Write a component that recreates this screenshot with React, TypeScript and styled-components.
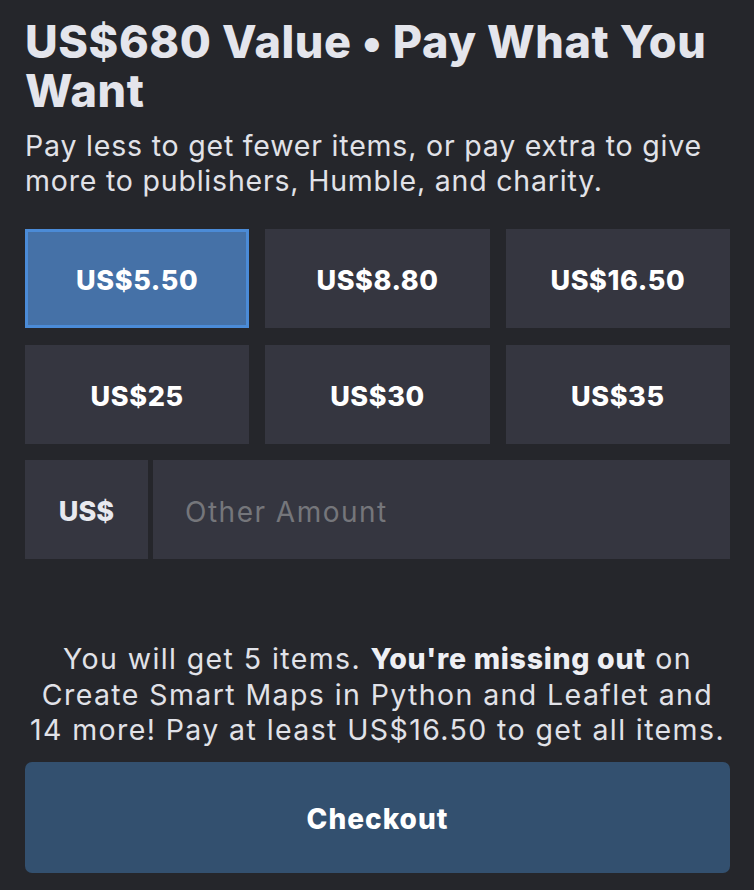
import styled, { createGlobalStyle } from "styled-components";

const GlobalStyle = createGlobalStyle`
  html, body {
    margin: 0;
    padding: 0;
    background: #25262b;
  }
  body {
    font-family: Inter, "Open Sans", sans-serif;
  }
`;

const Panel = styled.div`
  box-sizing: border-box;
  width: 754px;
  height: 890px;
  padding: 17px 24px 0 25px;
  background: #25262b;
  color: #e4e5ec;
  display: flex;
  flex-direction: column;
`;

const Title = styled.h1`
  margin: 0;
  font-size: 45px;
  line-height: 49px;
  font-weight: 800;
  letter-spacing: 0.6px;
  color: #e4e5ec;
`;

const Subtitle = styled.p`
  margin: 13px 0 0;
  font-size: 28.5px;
  line-height: 35px;
  font-weight: 400;
  letter-spacing: 0.8px;
  color: #e1e2e8;
`;

const AmountGrid = styled.div`
  display: grid;
  grid-template-columns: repeat(3, 1fr);
  gap: 17px 16px;
  margin-top: 31px;
`;

const AmountButton = styled.button<{ $selected?: boolean }>`
  box-sizing: border-box;
  height: 99px;
  padding-top: 4px;
  border: 3px solid ${(p) => (p.$selected ? "#4b8bd7" : "transparent")};
  background: ${(p) => (p.$selected ? "#4571a7" : "#353640")};
  color: #ffffff;
  font-family: Inter, sans-serif;
  font-size: 27px;
  font-weight: 800;
  letter-spacing: 0.6px;
  cursor: pointer;
`;

const OtherRow = styled.div`
  display: flex;
  gap: 5px;
  height: 99px;
  margin-top: 16px;
`;

const CurrencyLabel = styled.div`
  width: 123px;
  padding-top: 4px;
  background: #353640;
  display: flex;
  align-items: center;
  justify-content: center;
  font-size: 27px;
  font-weight: 800;
  color: #e8e9ef;
`;

const AmountInput = styled.input`
  flex: 1;
  min-width: 0;
  border: none;
  outline: none;
  background: #353640;
  padding: 4px 0 0 32px;
  font-family: Inter, sans-serif;
  font-size: 28px;
  letter-spacing: 1.5px;
  color: #ffffff;
  &::placeholder {
    color: #75767b;
  }
`;

const Notice = styled.p`
  margin: 82px 0 0;
  text-align: center;
  font-size: 28.5px;
  line-height: 35.5px;
  letter-spacing: 1.4px;
  color: #e1e2e8;
  strong {
    font-weight: 800;
    letter-spacing: 0.7px;
    color: #eeeff4;
  }
`;

const CheckoutButton = styled.button`
  margin-top: 14px;
  height: 111px;
  padding-top: 4px;
  border: none;
  border-radius: 7px;
  background: #33506f;
  color: #ffffff;
  font-family: Inter, sans-serif;
  font-size: 28px;
  font-weight: 800;
  letter-spacing: 1px;
  cursor: pointer;
`;

const AMOUNTS = ["US$5.50", "US$8.80", "US$16.50", "US$25", "US$30", "US$35"];

const App = () => {
  return (
    <>
      <GlobalStyle />
      <Panel>
        <Title>US$680 Value • Pay What You Want</Title>
        <Subtitle>
          Pay less to get fewer items, or pay extra to give more to publishers,
          Humble, and charity.
        </Subtitle>
        <AmountGrid>
          {AMOUNTS.map((amount, i) => (
            <AmountButton key={amount} $selected={i === 0}>
              {amount}
            </AmountButton>
          ))}
        </AmountGrid>
        <OtherRow>
          <CurrencyLabel>US$</CurrencyLabel>
          <AmountInput placeholder="Other Amount" />
        </OtherRow>
        <Notice>
          You will get 5 items. <strong>You're missing out</strong> on Create
          Smart Maps in Python and Leaflet and 14 more! Pay at least US$16.50 to
          get all items.
        </Notice>
        <CheckoutButton>Checkout</CheckoutButton>
      </Panel>
    </>
  );
};

export default App;
